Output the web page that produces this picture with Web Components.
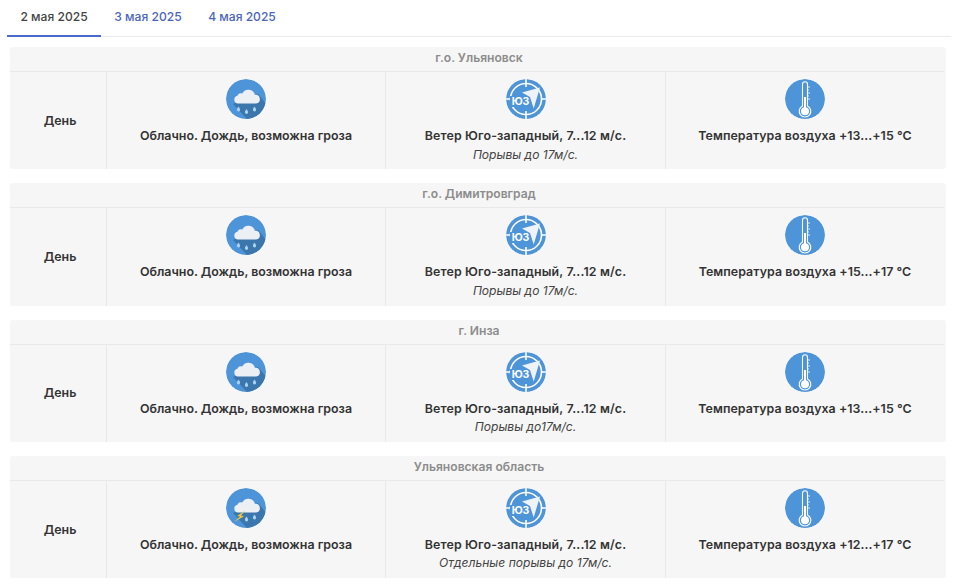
<!DOCTYPE html>
<html lang="ru">
  <head>
    <meta charset="UTF-8" />
    <title>Прогноз погоды</title>
    <style>
      html, body { margin: 0; background: #fff; overflow: hidden; }
      body { font-family: Inter, "Liberation Sans", sans-serif; color: #333; height: 588px; }
    </style>
  </head>
  <body>
    <forecast-page>
      <date-tabs>
        <date-tab active>2 мая 2025</date-tab>
        <date-tab>3 мая 2025</date-tab>
        <date-tab>4 мая 2025</date-tab>
      </date-tabs>

      <forecast-card place="г.о. Ульяновск" sky="rain" wind="Порывы до 17м/с." temp="+13...+15"></forecast-card>
      <forecast-card place="г.о. Димитровград" sky="rain" wind="Порывы до 17м/с." temp="+15...+17"></forecast-card>
      <forecast-card place="г. Инза" sky="rain" wind="Порывы до17м/с." temp="+13...+15"></forecast-card>
      <forecast-card place="Ульяновская область" sky="storm" wind="Отдельные порывы до 17м/с." temp="+12...+17"></forecast-card>
    </forecast-page>

    <script>
      class ForecastPage extends HTMLElement {
        constructor() {
          super();
          this.attachShadow({ mode: "open" });
          this.shadowRoot.innerHTML = `
            <style>
              :host {
                display: flex;
                flex-direction: column;
                gap: 14px;
                padding: 0 14px 0 10px;
              }
              ::slotted(date-tabs) { margin: 0 -5px -4px -3px; }
            </style>
            <slot></slot>
          `;
        }
      }

      class DateTabs extends HTMLElement {
        constructor() {
          super();
          this.attachShadow({ mode: "open" });
          this.shadowRoot.innerHTML = `
            <style>
              :host {
                display: flex;
                height: 36px;
                border-bottom: 1px solid #e9eaec;
              }
            </style>
            <slot></slot>
          `;
        }
      }

      class DateTab extends HTMLElement {
        constructor() {
          super();
          this.attachShadow({ mode: "open" });
          this.shadowRoot.innerHTML = `
            <style>
              :host {
                display: block;
                box-sizing: border-box;
                width: 94px;
                height: 37px;
                padding-top: 9px;
                font-size: 12.1px;
                font-weight: 500;
                line-height: 16px;
                text-align: center;
                color: #4a65bd;
              }
              :host([active]) {
                color: #444;
                border-bottom: 2px solid #4a6bc9;
              }
            </style>
            <slot></slot>
          `;
        }
      }

      class WeatherIcon extends HTMLElement {
        connectedCallback() {
          const kind = this.getAttribute("kind");
          const drop = (x, y) => `<path d="M${x} ${y}c1 1.500 1.600 2.400 1.600 3.300a1.600 1.600 0 0 1-3.200 0c0-.9.600-1.800 1.600-3.300z" fill="#a9d2f2"/>`;
          const cloud = `<path d="M7 25 L21 40 A20 20 0 0 0 39.500 24 L32 15 Z" fill="#3b76ad"/>
            <path d="M12 24.500a3.900 3.900 0 0 1-.6-7.700a3.600 3.600 0 0 1 4.800-2.300a6.800 6.800 0 0 1 12.700 1.300a4.400 4.400 0 0 1 1.300 8.700z" fill="#eceff3"/>`;
          const shapes = {
            rain: `<circle cx="20" cy="20" r="20" fill="#4e94d8"/>${cloud}${drop(12.500, 27.500)}${drop(20.500, 30)}${drop(28.500, 27.500)}`,
            storm: `<circle cx="20" cy="20" r="20" fill="#4e94d8"/>${cloud}${drop(20.500, 28.500)}${drop(28.500, 26.500)}
              <path d="M19.300 22.500 L11 28 L14 28.500 L8 34 L18 28.300 L15 27.500 Z" fill="#f0c63c"/>`,
            wind: `<circle cx="20" cy="20" r="20" fill="#4e94d8"/>
              <circle cx="20" cy="20" r="15.500" fill="none" stroke="#fff" stroke-width="1.600"/>
              <path d="M20 0v8M20 32v8M0 20h5M35 20h5" stroke="#fff" stroke-width="1.600"/>
              <rect x="4" y="17" width="20" height="11" fill="#4e94d8"/>
              <path d="M16 13.500 L34 8.500 L27.700 29.500 L24 18 Z" fill="#eef3f9"/>
              <text x="14.500" y="26.200" text-anchor="middle" font-family="Inter, 'Liberation Sans', sans-serif" font-size="10.500" font-weight="700" fill="#fff">ЮЗ</text>`,
            temp: `<circle cx="20" cy="20" r="20" fill="#4e94d8"/>
              <path d="M17.500 27V5.200a2.500 2.500 0 0 1 5 0V27a5.800 5.800 0 1 1-5 0z" fill="none" stroke="#fff" stroke-width="1.100"/>
              <path d="M19 18h2v11h-2z" fill="#fff"/>
              <circle cx="20" cy="32.200" r="4" fill="#fff"/>
              <path d="M22.500 8h2.500M22.500 11h1.500M22.500 14h2.500M22.500 17h1.500M22.500 20h2.500" stroke="#fff" stroke-width=".8"/>`
          };
          this.attachShadow({ mode: "open" });
          this.shadowRoot.innerHTML = `
            <style>
              :host { display: block; width: 40px; height: 40px; }
              svg { display: block; }
            </style>
            <svg width="40" height="40" viewBox="0 0 40 40">
              <defs><clipPath id="round"><circle cx="20" cy="20" r="20"/></clipPath></defs>
              <g clip-path="url(#round)">${shapes[kind]}</g>
            </svg>
          `;
        }
      }

      class ForecastCell extends HTMLElement {
        connectedCallback() {
          this.attachShadow({ mode: "open" });
          this.shadowRoot.innerHTML = `
            <style>
              :host {
                display: flex;
                flex-direction: column;
                align-items: center;
                box-sizing: border-box;
                padding-top: 7px;
                border-left: 1px solid #e9e9e9;
                min-width: 0;
              }
              .title {
                margin-top: 8px;
                font-size: 12.4px;
                letter-spacing: var(--title-spacing, 0);
                line-height: 17px;
                font-weight: 600;
                color: #333;
                white-space: nowrap;
              }
              .note {
                margin-top: 1.5px;
                font-size: 12.1px;
                line-height: 17px;
                font-style: italic;
                color: #444;
                white-space: nowrap;
              }
              .note:empty { display: none; }
            </style>
            <slot name="icon"></slot>
            <div class="title">${this.getAttribute("title-text")}</div>
            <div class="note">${this.getAttribute("note") || ""}</div>
          `;
        }
      }

      class ForecastCard extends HTMLElement {
        connectedCallback() {
          const sky = this.getAttribute("sky");
          const temp = this.getAttribute("temp");
          const wind = this.getAttribute("wind");
          this.attachShadow({ mode: "open" });
          this.shadowRoot.innerHTML = `
            <style>
              :host {
                display: block;
                height: 122.33px;
                background: #f6f6f6;
                border-radius: 3px;
                padding-right: 2px;
              }
              header {
                height: 24px;
                line-height: 22px;
                padding-left: 4px;
                text-align: center;
                font-size: 12.1px;
                font-weight: 600;
                color: #8c8c8c;
                border-bottom: 1px solid #e9e9e9;
              }
              .row {
                display: grid;
                grid-template-columns: 96px 279px 280px 279px;
                height: 97.33px;
              }
              .part {
                display: flex;
                align-items: center;
                justify-content: center;
                padding: 0 0 1px 4px;
                font-size: 12.4px;
                font-weight: 600;
                color: #333;
              }
              .wind { --title-spacing: .15px; }
              .temp { --title-spacing: .05px; }
            </style>
            <header>${this.getAttribute("place")}</header>
            <div class="row">
              <div class="part">День</div>
              <forecast-cell title-text="Облачно. Дождь, возможна гроза">
                <weather-icon slot="icon" kind="${sky}"></weather-icon>
              </forecast-cell>
              <forecast-cell class="wind" title-text="Ветер Юго-западный, 7...12 м/с." note="${wind}">
                <weather-icon slot="icon" kind="wind"></weather-icon>
              </forecast-cell>
              <forecast-cell class="temp" title-text="Температура воздуха ${temp} °С">
                <weather-icon slot="icon" kind="temp"></weather-icon>
              </forecast-cell>
            </div>
          `;
        }
      }

      window.customElements.define("forecast-page", ForecastPage);
      window.customElements.define("date-tabs", DateTabs);
      window.customElements.define("date-tab", DateTab);
      window.customElements.define("weather-icon", WeatherIcon);
      window.customElements.define("forecast-cell", ForecastCell);
      window.customElements.define("forecast-card", ForecastCard);
    </script>
  </body>
</html>
